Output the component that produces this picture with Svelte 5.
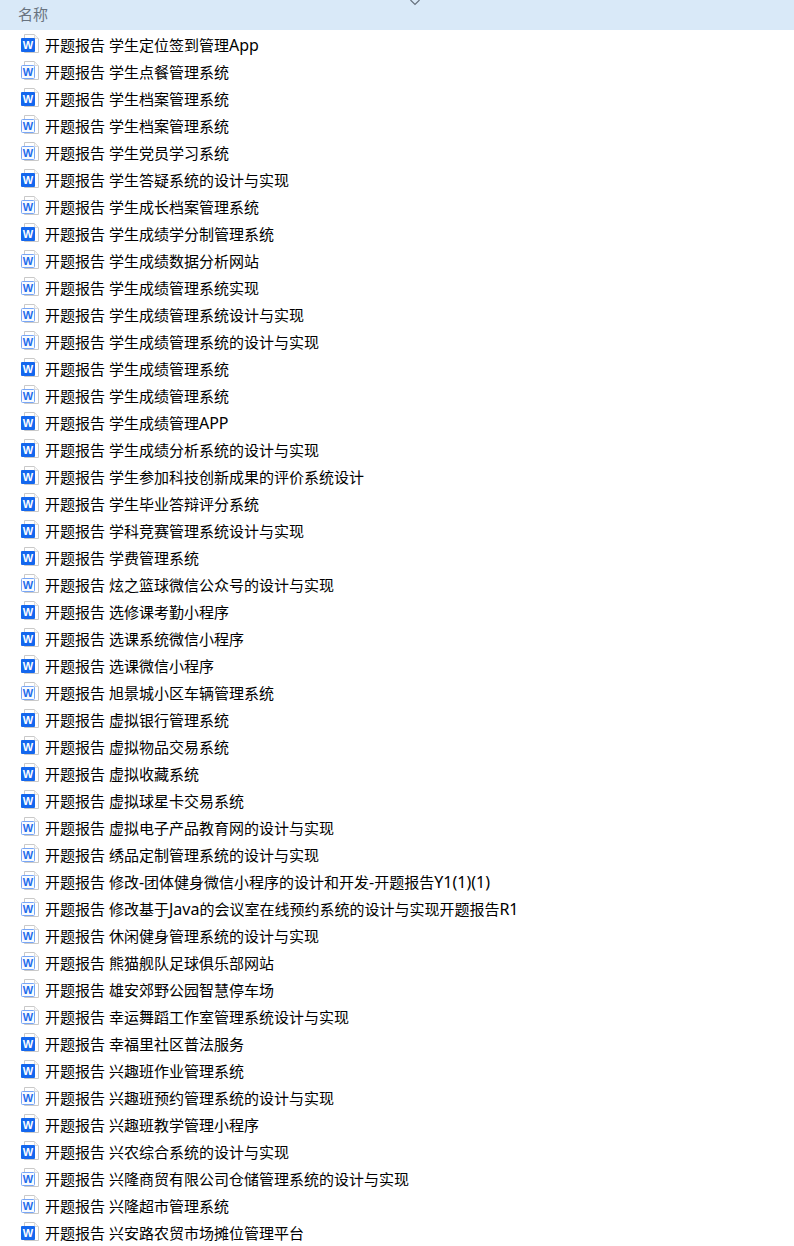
<script>
	// second value: 1 = filled blue icon, 0 = outlined variant
	const files = [
		['学生定位签到管理App', 1],
		['学生点餐管理系统', 0],
		['学生档案管理系统', 1],
		['学生档案管理系统', 0],
		['学生党员学习系统', 0],
		['学生答疑系统的设计与实现', 1],
		['学生成长档案管理系统', 0],
		['学生成绩学分制管理系统', 1],
		['学生成绩数据分析网站', 0],
		['学生成绩管理系统实现', 0],
		['学生成绩管理系统设计与实现', 0],
		['学生成绩管理系统的设计与实现', 0],
		['学生成绩管理系统', 1],
		['学生成绩管理系统', 0],
		['学生成绩管理APP', 1],
		['学生成绩分析系统的设计与实现', 1],
		['学生参加科技创新成果的评价系统设计', 1],
		['学生毕业答辩评分系统', 1],
		['学科竞赛管理系统设计与实现', 1],
		['学费管理系统', 1],
		['炫之篮球微信公众号的设计与实现', 0],
		['选修课考勤小程序', 1],
		['选课系统微信小程序', 1],
		['选课微信小程序', 1],
		['旭景城小区车辆管理系统', 0],
		['虚拟银行管理系统', 1],
		['虚拟物品交易系统', 1],
		['虚拟收藏系统', 1],
		['虚拟球星卡交易系统', 1],
		['虚拟电子产品教育网的设计与实现', 0],
		['绣品定制管理系统的设计与实现', 0],
		['修改-团体健身微信小程序的设计和开发-开题报告Y1(1)(1)', 0],
		['修改基于Java的会议室在线预约系统的设计与实现开题报告R1', 0],
		['休闲健身管理系统的设计与实现', 0],
		['熊猫舰队足球俱乐部网站', 0],
		['雄安郊野公园智慧停车场', 0],
		['幸运舞蹈工作室管理系统设计与实现', 0],
		['幸福里社区普法服务', 1],
		['兴趣班作业管理系统', 1],
		['兴趣班预约管理系统的设计与实现', 0],
		['兴趣班教学管理小程序', 1],
		['兴农综合系统的设计与实现', 1],
		['兴隆商贸有限公司仓储管理系统的设计与实现', 0],
		['兴隆超市管理系统', 0],
		['兴安路农贸市场摊位管理平台', 1]
	];

	// latin runs render a touch larger than the CJK text around them
	const runs = (name) => name.split(/([A-Za-z0-9()\-]+)/).filter(Boolean);
	const isLatin = (run) => /^[A-Za-z0-9()\-]+$/.test(run);
</script>

{#snippet docIcon(filled)}
	<svg class="icon" width="20" height="24" viewBox="0 0 20 24" aria-hidden="true">
		<path d="M4.500 1.500H14.500l4 4V19.500H4.500z" fill="#fff" stroke="#c9c9c9" stroke-width="1" />
		<path d="M14.500 1.500V5.500h4" fill="#f6f6f6" stroke="#dcdcdc" stroke-width="1" />
		{#if filled}
			<rect x="1" y="5" width="14" height="14" rx="1" fill="#1467ee" />
		{:else}
			<rect x="1.500" y="5.500" width="13" height="13" rx="1" fill="#f8fbff" stroke="#78a6f6" stroke-width="1" />
		{/if}
		<text x="8" y="16" text-anchor="middle" class="w" fill={filled ? '#fff' : '#1f6cec'}>W</text>
	</svg>
{/snippet}

<div class="page">
	<div class="header">
		<span>名称</span>
		<svg class="chevron" width="12" height="6" viewBox="0 0 12 6" aria-hidden="true">
			<path d="M1.500 0L6 4.500 10.500 0" fill="none" stroke="#66707c" stroke-width="1.200" />
		</svg>
	</div>
	<ul class="list">
		{#each files as [name, filled]}
			<li class="row">
				{@render docIcon(filled)}
				<span class="name">开题报告 {#each runs(name) as run}{#if isLatin(run)}<span class="latin">{run}</span>{:else}{run}{/if}{/each}</span>
			</li>
		{/each}
	</ul>
</div>

<style>
	:global(body) {
		margin: 0;
		background: #fff;
	}

	.page {
		width: 794px;
		height: 1246px;
		overflow: hidden;
		font-family: 'Noto Sans', 'Noto Sans CJK SC', sans-serif;
	}

	.header {
		position: relative;
		height: 27px;
		padding: 0 0 3px 18px;
		display: flex;
		align-items: center;
		background: #d9e9f8;
		color: #68737f;
		font-size: 15px;
	}

	.chevron {
		position: absolute;
		left: 409px;
		top: 0;
	}

	.list {
		list-style: none;
		margin: 0;
		padding: 2px 0 0 20px;
	}

	.row {
		display: flex;
		align-items: flex-start;
		height: 27px;
		gap: 5px;
		color: #000;
		font-size: 15px;
		line-height: 27px;
		white-space: nowrap;
	}

	.icon {
		flex: none;
		margin-top: 1px;
	}

	.latin {
		font-size: 16px;
	}

	.w {
		font-family: 'Liberation Sans', sans-serif;
		font-size: 11px;
		font-weight: 700;
	}
</style>
